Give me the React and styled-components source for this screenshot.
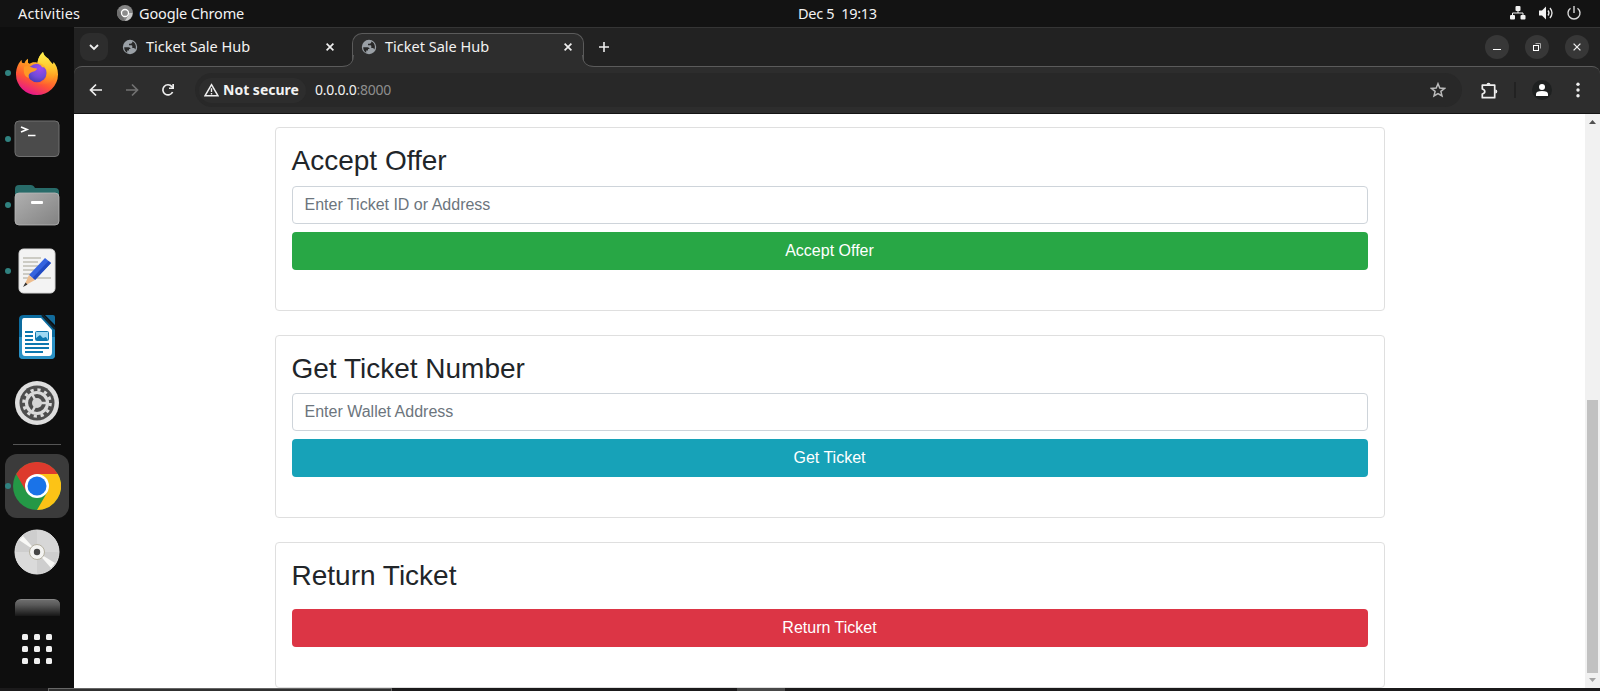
import React from "react";
import styled, { createGlobalStyle } from "styled-components";

const Global = createGlobalStyle`
  * { box-sizing: border-box; }
  html, body, #root { margin: 0; height: 691px; overflow: hidden; }
  body { background: #131313; }
  svg { display: block; flex: none; }
`;

const Desktop = styled.div`
  width: 1600px;
  height: 691px;
  display: flex;
  flex-direction: column;
  background: #131313;
  color: #f2f2f2;
  font-family: "Noto Sans", "Open Sans", sans-serif;
  font-size: 14.5px;
  overflow: hidden;
`;

const TopBar = styled.header`
  height: 27px;
  flex: none;
  display: grid;
  grid-template-columns: 780px auto 1fr;
  align-items: center;
  padding: 0 19px 1px 18px;
`;

const TopGroup = styled.div`
  display: flex;
  align-items: center;
  justify-content: ${(p) => (p.$end ? "flex-end" : "flex-start")};
  gap: ${(p) => p.$gap}px;
`;

const Text = styled.span`
  display: block;
  flex: none;
  width: ${(p) => (p.$w ? p.$w + "px" : "auto")};
  font-size: ${(p) => p.$size || 14.5}px;
  font-weight: ${(p) => p.$weight || 400};
  letter-spacing: ${(p) => p.$track || 0}px;
  color: ${(p) => p.$color || "#f2f2f2"};
  line-height: 20px;
  white-space: pre;
`;

const TopText = styled(Text)`
  padding-bottom: 1px;
`;

const Workspace = styled.div`
  height: 661px;
  flex: none;
  display: flex;
`;

const Dock = styled.nav`
  width: 74px;
  flex: none;
  background: #0e0e0e;
  display: flex;
  flex-direction: column;
  align-items: center;
  padding-top: 14px;
`;

const DockItem = styled.div`
  width: 64px;
  height: 64px;
  margin-bottom: ${(p) => p.$after ?? 2}px;
  flex: none;
  display: flex;
  align-items: center;
  justify-content: center;
  position: relative;
  border-radius: 12px;
  background: ${(p) => (p.$active ? "#3b3b3b" : "transparent")};
`;

const RunningDot = styled.i`
  position: absolute;
  left: 0;
  top: 29px;
  width: 6px;
  height: 6px;
  border-radius: 50%;
  background: #308280;
`;

const DockRule = styled.div`
  width: 48px;
  height: 1px;
  flex: none;
  background: #555;
  margin-bottom: 9px;
`;

const ClippedIcon = styled.div`
  width: 45px;
  height: 17px;
  flex: none;
  border-radius: 6px 6px 0 0;
  background: linear-gradient(#6d6d6d, #5a5a5a 30%, #171717);
  border-top: 1px solid #858585;
  margin-bottom: 18px;
`;

const AppGrid = styled.div`
  display: grid;
  grid-template-columns: repeat(3, 6px);
  grid-auto-rows: 6px;
  gap: 6px;
`;

const GridDot = styled.i`
  border-radius: 1.5px;
  background: #f0f0f0;
`;

const Browser = styled.main`
  flex: 1;
  display: flex;
  flex-direction: column;
  background: #222;
`;

const TabStrip = styled.div`
  height: 39px;
  flex: none;
  display: flex;
  align-items: flex-start;
  border-top: 1px solid #353535;
`;

const MenuSlot = styled.div`
  width: 40px;
  padding: 5px 0 0 6px;
`;

const TabMenu = styled.div`
  width: 28px;
  height: 28px;
  border-radius: 9px;
  background: #2d2d2d;
  display: flex;
  align-items: center;
  justify-content: center;
`;

const Tab = styled.div`
  width: ${(p) => (p.$active ? 232 : 228)}px;
  height: ${(p) => (p.$active ? 34 : 38)}px;
  margin: ${(p) => (p.$active ? "5px 0 0 10px" : "0")};
  padding: ${(p) => (p.$active ? "0 11px 8px 8px" : "0 8px 1px 8px")};
  flex: none;
  display: flex;
  align-items: center;
  position: relative;
  z-index: ${(p) => (p.$active ? 1 : 0)};
  background: ${(p) => (p.$active ? "#2d2d2d" : "transparent")};
  border: solid #5b5b5b;
  border-width: ${(p) => (p.$active ? "1px 1px 0" : "0")};
  border-radius: ${(p) => (p.$active ? "10px 10px 0 0" : "0")};
`;

const TabLabel = styled(Text)`
  flex: 1;
  margin-left: 8px;
  padding-bottom: 1px;
`;

const TabFlare = styled.svg`
  position: absolute;
  bottom: 0;
  ${(p) => (p.$right ? "left: 229px; transform: scaleX(-1);" : "right: 229px;")}
`;

const StripRest = styled.div`
  flex: 1;
  height: 38px;
  display: flex;
  align-items: center;
  padding: 0 11px 1px 15px;
  gap: 16px;
`;

const Spacer = styled.div`
  flex: 1;
`;

const WindowButton = styled.div`
  width: 24px;
  height: 24px;
  border-radius: 50%;
  background: #373737;
  display: flex;
  align-items: center;
  justify-content: center;
`;

const Toolbar = styled.div`
  height: 48px;
  flex: none;
  display: flex;
  align-items: center;
  padding: 0 14px 1px 14px;
  background: #2d2d2d;
  border: solid #5b5b5b;
  border-width: 1px 0 0;
  border-radius: 8px 8px 0 0;
  box-shadow: inset 0 -1px #141414;
`;

const NavButtons = styled.div`
  width: 107px;
  display: flex;
  gap: 20px;
`;

const AddressBar = styled.div`
  width: 1267px;
  height: 34px;
  border-radius: 17px;
  background: #282828;
  display: flex;
  align-items: center;
  padding: 0 16px 0 4px;
`;

const SecurityChip = styled.div`
  width: 107px;
  height: 25px;
  border-radius: 13px;
  background: #2d2d2d;
  display: flex;
  align-items: center;
  padding-left: 5px;
  gap: 4px;
  margin-right: 9px;
`;

const ToolbarActions = styled.div`
  flex: 1;
  display: flex;
  align-items: center;
  padding-left: 19px;
`;

const ActionRule = styled.div`
  width: 2px;
  height: 16px;
  margin: 0 16px;
  background: #222;
`;

const Avatar = styled.div`
  width: 20px;
  height: 20px;
  border-radius: 50%;
  background: #1e2020;
  display: flex;
  align-items: center;
  justify-content: center;
  margin-right: 19px;
`;

const Viewport = styled.div`
  height: 574px;
  flex: none;
  display: flex;
  background: #fff;
  color: #212529;
  font-family: "Liberation Sans", Arial, sans-serif;
`;

const Page = styled.div`
  flex: 1;
  height: 574px;
  overflow: hidden;
  padding: 13px 200.5px 0;
`;

const Card = styled.section`
  border: 1px solid #dfdfdf;
  border-radius: 4px;
  padding: 16px 16px 40px;
  margin-bottom: 24px;
`;

const CardTitle = styled.h3`
  margin: 0 0 8px;
  font-size: 28px;
  font-weight: 400;
  line-height: 33.6px;
`;

const Field = styled.input`
  display: block;
  width: 100%;
  height: 38px;
  border: 1px solid #ced4da;
  border-radius: 4px;
  padding: 6px 12px;
  font: 16px/24px "Liberation Sans", Arial, sans-serif;
  background: #fff;
  &::placeholder { color: #6c757d; opacity: 1; }
`;

const Button = styled.button`
  display: block;
  width: 100%;
  height: 38px;
  margin-top: ${(p) => (p.$spaced ? 16 : 8)}px;
  border: 0;
  border-radius: 4px;
  padding: 0;
  background: ${(p) => p.$color};
  color: #fff;
  font: 16px/24px "Liberation Sans", Arial, sans-serif;
`;

const ScrollTrack = styled.div`
  width: 15px;
  flex: none;
  background: #f1f1f1;
  display: flex;
  flex-direction: column;
  align-items: center;
  padding-top: 6px;
`;

const ScrollThumb = styled.div`
  width: 11px;
  height: 273px;
  margin: 276px 0 5px;
  background: #c1c1c1;
`;

const BottomEdge = styled.footer`
  height: 3px;
  flex: none;
  display: flex;
  background: #1b1a1b;
`;

const EdgeWindow = styled.div`
  width: ${(p) => p.$w}px;
  flex: none;
  margin-left: ${(p) => p.$left}px;
  background: ${(p) => (p.$plain ? "#484848" : "#303030")};
  border: solid #666;
  border-width: ${(p) => (p.$plain ? "0" : "1px 1px 0")};
`;

const Globe = () => (
  <svg width="16" height="16" viewBox="0 0 16 16">
    <circle cx="8" cy="8" r="7.2" fill="#9aa0a6" />
    <path d="M2.2 8.2h4.3c1.2 0 2 .8 2 1.800H7v1.600H5.2v2.100C3.300 12.700 2.200 10.800 2.200 8.200zM10.300 2.400c2.300.9 3.600 2.900 3.600 5.400 0 1-.2 1.900-.6 2.700-.3-1-1-1.500-1.900-1.500H10.300V7.100c0-.6-.4-.9-.9-.9H7V4.800h1.500c.9 0 1.800-.8 1.800-1.700z" fill="#282828" />
  </svg>
);

const Cross = ({ size = 8, color = "#eee", weight = 1.7 }) => (
  <svg width={size} height={size} viewBox="0 0 8 8">
    <path d="M.6.6l6.800 6.800M7.400.6L.6 7.400" stroke={color} strokeWidth={weight} />
  </svg>
);

const ChromeMono = () => (
  <svg width="16" height="16" viewBox="0 0 16 16">
    <circle cx="8" cy="8" r="8" fill="#858585" />
    <path d="M8 8h7.500A8 8 0 0 1 8 16l3.500-6z" fill="#c8c8c8" />
    <path d="M1 4l4 6 3 6A8 8 0 0 1 1 4z" fill="#6e6e6e" />
    <circle cx="8" cy="8" r="3.500" fill="#8b8b8b" stroke="#fff" strokeWidth="1.300" />
  </svg>
);

const Network = () => (
  <svg width="16" height="14" viewBox="0 0 16 14" fill="#f2f2f2">
    <rect x="5.500" y="0" width="5" height="5" rx="1" />
    <rect x="0" y="9" width="5" height="4.500" rx="1" />
    <rect x="10.500" y="9" width="5" height="4.500" rx="1" />
    <path d="M8 4v3M2.500 10V7h10.500v3" fill="none" stroke="#f2f2f2" />
  </svg>
);

const Volume = () => (
  <svg width="16" height="14" viewBox="0 0 16 14">
    <path d="M0 4.500h3L7 .5v13L3 9.500H0z" fill="#f2f2f2" />
    <path d="M9 4.500q2 2.500 0 5M11 2q4 5 0 10" fill="none" stroke="#e8e8e8" strokeWidth="1.300" />
  </svg>
);

const Power = () => (
  <svg width="14" height="14" viewBox="0 0 14 14" fill="none" stroke="#d8d8d8" strokeWidth="1.400">
    <path d="M7 0v7M3.500 2.200a6 6 0 1 0 7 0" />
  </svg>
);

const Arrow = ({ back }) => (
  <svg width="16" height="16" viewBox="0 0 16 16" fill="none" stroke={back ? "#efefef" : "#717171"} strokeWidth="1.700">
    {back ? <path d="M14 8H3M8 2.500L2.500 8 8 13.500" /> : <path d="M2 8h11M8 2.500L13.500 8 8 13.500" />}
  </svg>
);

const Reload = () => (
  <svg width="16" height="16" viewBox="0 0 16 16">
    <path d="M12.600 10A5.100 5.100 0 1 1 11.900 4.600L13.300 6" fill="none" stroke="#efefef" strokeWidth="1.700" />
    <path d="M14 2v5H9V5.500h3.300V2z" fill="#efefef" />
  </svg>
);

const Warning = () => (
  <svg width="15" height="14" viewBox="0 0 15 14">
    <path d="M7.500 1.700L14 12.800H1z" fill="none" stroke="#efefef" strokeWidth="1.500" />
    <path d="M7.500 5.300v3.800M7.500 10v1.400" stroke="#efefef" strokeWidth="1.400" />
  </svg>
);

const Star = () => (
  <svg width="16" height="16" viewBox="0 0 16 16">
    <path d="M8 1.700l1.800 4.300 4.700.4-3.600 3 1.100 4.600L8 11.600 4 14l1.100-4.600-3.600-3L6.200 6z" fill="none" stroke="#bbb" strokeWidth="1.500" />
  </svg>
);

const Puzzle = () => (
  <svg width="17" height="17" viewBox="0 0 17 17">
    <path d="M1.300 3.200h12.400v12.500H1.300V12q2.500-.6 2.500-2.500T1.300 7z" fill="none" stroke="#efefef" strokeWidth="1.700" strokeLinejoin="round" />
    <path d="M5.500 2.700a2 2 0 0 1 4 0zM14.300 7.500a2 2 0 0 1 0 4z" fill="#efefef" />
  </svg>
);

const Firefox = () => (
  <svg width="44" height="45" viewBox="0 0 44 46" preserveAspectRatio="none">
    <defs>
      <linearGradient id="ff-body" x1=".8" y1="0" x2=".35" y2="1">
        <stop offset=".1" stopColor="#fff04a" />
        <stop offset=".42" stopColor="#ff9a20" />
        <stop offset=".7" stopColor="#ff5535" />
        <stop offset="1" stopColor="#e5148f" />
      </linearGradient>
      <radialGradient id="ff-core" cx=".65" cy=".25" r=".8">
        <stop offset="0" stopColor="#a04af0" />
        <stop offset=".6" stopColor="#704bd8" />
        <stop offset="1" stopColor="#4a3ab5" />
      </radialGradient>
      <linearGradient id="ff-tail" x1=".5" y1="0" x2=".5" y2="1">
        <stop offset="0" stopColor="#fff34f" />
        <stop offset=".5" stopColor="#ffc52d" />
        <stop offset="1" stopColor="#ff8a1e" stopOpacity=".1" />
      </linearGradient>
    </defs>
    <path d="M28 1c-3 3-5 6-5.500 11-4-1-6 0-8 1l-1.500-1V8c-2 1-3 3-3.500 4.500L7 12 6.500 9C2 14 1 20 1 24a21 21 0 0 0 42 0c0-6-2-10-4.500-13v3c-2-2-4-4-5-6-3-2-5-4-5.500-7z" fill="url(#ff-body)" />
    <path d="M28 1c-3 3-5 6-5.500 11 5 1 9 5 9 11 0 7-4 10-10 10 9 4 18-1 19-12 .5-5-1-8-2.500-9v3c-1.500-3-4-5-5-7-3-2-4.500-4-5-7z" fill="url(#ff-tail)" />
    <circle cx="22" cy="22.500" r="9.500" fill="url(#ff-core)" />
    <path d="M9 16c4-2 6 1 13 2 0 2-3 3-5 3.500-3 1-4 3-3 6-4-1-6-5-5-11.500z" fill="#ff9825" />
    <path d="M22 12.500c2 0 4 .3 6 1.500l3 3c-2-.5-3-.3-4-.5-1-2-3-3-5-4z" fill="#ffb92a" />
  </svg>
);

const Terminal = () => (
  <svg width="46" height="38" viewBox="0 0 46 38">
    <rect x="1" y="1" width="44" height="35.500" rx="4" fill="#4b4b4b" stroke="#707070" />
    <path d="M7 7l6 2.500L7 12M14 15.500h7.500" fill="none" stroke="#fff" strokeWidth="1.700" />
  </svg>
);

const Files = () => (
  <svg width="46" height="42" viewBox="0 0 46 42">
    <defs>
      <linearGradient id="folder" x1="0" y1="0" x2="1" y2="1">
        <stop stopColor="#b0b0b0" /><stop offset="1" stopColor="#828282" />
      </linearGradient>
    </defs>
    <path d="M1 14V5q0-4 4-4h12q2 0 3 1.500l1 1.500h20q4 0 4 4v6z" fill="#286b69" />
    <rect x="1" y="9" width="44" height="32" rx="4" fill="url(#folder)" stroke="#b9b9b9" strokeWidth=".8" />
    <rect x="17" y="17" width="12" height="3" rx="1" fill="#fff" />
  </svg>
);

const TextEditor = () => (
  <svg width="38" height="46" viewBox="0 0 38 46">
    <rect x="1" y="1" width="36" height="44" rx="4.500" fill="#f3f3f3" stroke="#d5d5d5" />
    <path d="M5 10h18M5 14h15M5 18h18M5 22h15M5 26h12M5 30h28" stroke="#c0beb5" strokeWidth="1.500" />
    <path d="M27 10l6 5-16 17-6-5z" fill="#3563df" />
    <path d="M33 15L17 32l-2.500-2L30.500 13z" fill="#214ac2" />
    <path d="M11 27l6 5-11 6z" fill="#edbd8e" />
    <path d="M7.500 34.500l2 2L5 39z" fill="#333" />
  </svg>
);

const Writer = () => (
  <svg width="38" height="46" viewBox="0 0 38 46">
    <path d="M6 1h19l12 13v27q0 4-4 4H5q-4 0-4-4V5q0-4 5-4z" fill="#0c6c9f" />
    <path d="M1 23h36v18q0 4-4 4H5q-4 0-4-4z" fill="#2a91c5" />
    <path d="M27 1h8q2 0 2 2v8z" fill="#126b9b" />
    <path d="M24 1l13 14" stroke="#10222c" strokeWidth="2" />
    <path d="M6 4h17l11 12v22q0 4-3 4H7q-3 0-3-4V7q0-3 2-3z" fill="#fff" />
    <path d="M7 18h8M7 22h8M7 26h8M7 30h24M7 34h24M7 38h18" stroke="#0d78b0" strokeWidth="1.800" />
    <rect x="17.500" y="17.500" width="13" height="9" rx="1" fill="#9ed8f3" stroke="#0d78b0" />
    <path d="M18 26v-2l4-3 3 3 3-1 2 3z" fill="#0d78b0" />
  </svg>
);

const Settings = () => (
  <svg width="46" height="46" viewBox="0 0 46 46" fill="none">
    <circle cx="23" cy="23" r="22" fill="#dedede" />
    <circle cx="23" cy="23" r="17.500" fill="#4d4d4d" />
    <circle cx="23" cy="23" r="13.300" stroke="#dadada" strokeWidth="3" strokeDasharray="3.200 3.764" />
    <circle cx="23" cy="23" r="10.500" stroke="#dadada" strokeWidth="3.200" />
    <path d="M23 23l-5-9M23 23h11M23 23l-5 9" stroke="#dadada" strokeWidth="2.500" />
    <circle cx="23" cy="23" r="5" fill="#d6d6d6" />
  </svg>
);

const Chrome = () => (
  <svg width="48" height="48" viewBox="0 0 48 48">
    <circle cx="24" cy="24" r="24" fill="#249846" />
    <path d="M24 12h20.800A24 24 0 0 1 24 48l10.400-18z" fill="#fcc316" />
    <path d="M3.200 12A24 24 0 0 1 44.800 12H24L13.600 30z" fill="#dd3a2d" />
    <circle cx="24" cy="24" r="12" fill="#fff" />
    <circle cx="24" cy="24" r="9.500" fill="#1a73e8" />
  </svg>
);

const Disc = () => (
  <svg width="46" height="46" viewBox="0 0 46 46">
    <circle cx="23" cy="23" r="22" fill="#cecece" stroke="#e3e3e3" />
    <path d="M23 23V1a22 22 0 0 1 22 22z" fill="#d7d7d7" />
    <path d="M23 23V45A22 22 0 0 1 1 23z" fill="#dadada" />
    <path d="M23 23L5 11l4-4zM23 23l18 11-4 5z" fill="#f8f8f6" />
    <circle cx="23" cy="23" r="7.500" fill="#f4f4f2" stroke="#b5b1a1" />
    <circle cx="23" cy="23" r="3.200" fill="#464646" />
  </svg>
);

const PINNED = [
  { Icon: Firefox, running: true },
  { Icon: Terminal, running: true },
  { Icon: Files, running: true },
  { Icon: TextEditor, running: true },
  { Icon: Writer },
  { Icon: Settings, after: 9 },
];

const CARDS = [
  { title: "Accept Offer", hint: "Enter Ticket ID or Address", action: "Accept Offer", color: "#28a745" },
  { title: "Get Ticket Number", hint: "Enter Wallet Address", action: "Get Ticket", color: "#17a2b8" },
  { title: "Return Ticket", action: "Return Ticket", color: "#dc3545" },
];

const Flare = ({ right }) => (
  <TabFlare $right={right} width="12" height="12" viewBox="0 0 12 12">
    <path d="M0 12V11.500Q11.500 11.500 11.500 0H12V12z" fill="#2d2d2d" />
    <path d="M0 11.500Q11.500 11.500 11.500 0" fill="none" stroke="#5b5b5b" />
  </TabFlare>
);

const BrowserTab = ({ active }) => (
  <Tab $active={active}>
    {active && <Flare />}
    <Globe />
    <TabLabel>Ticket Sale Hub</TabLabel>
    <Cross />
    {active && <Flare right />}
  </Tab>
);

export default function App() {
  return (
    <Desktop>
      <Global />
      <TopBar>
        <TopGroup $gap={37}>
          <TopText $w={62} $track={0.18}>Activities</TopText>
          <TopGroup $gap={6}>
            <ChromeMono />
            <TopText $track={-0.15}>Google Chrome</TopText>
          </TopGroup>
        </TopGroup>
        <TopText $track={-0.3}>Dec 5  19:13</TopText>
        <TopGroup $end $gap={12.5}>
          <Network />
          <Volume />
          <Power />
        </TopGroup>
      </TopBar>

      <Workspace>
        <Dock>
          {PINNED.map(({ Icon, running, after }, i) => (
            <DockItem key={i} $after={after}>
              {running && <RunningDot />}
              <Icon />
            </DockItem>
          ))}
          <DockRule />
          <DockItem $active>
            <RunningDot />
            <Chrome />
          </DockItem>
          <DockItem $after={15}>
            <Disc />
          </DockItem>
          <ClippedIcon />
          <AppGrid>
            {Array.from({ length: 9 }, (_, i) => <GridDot key={i} />)}
          </AppGrid>
        </Dock>

        <Browser>
          <TabStrip>
            <MenuSlot>
              <TabMenu>
                <svg width="10" height="8" viewBox="0 0 10 8"><path d="M1 2l4 4 4-4" fill="none" stroke="#eee" strokeWidth="1.800" /></svg>
              </TabMenu>
            </MenuSlot>
            <BrowserTab />
            <BrowserTab active />
            <StripRest>
              <svg width="10" height="10" viewBox="0 0 10 10"><path d="M5 0v10M0 5h10" stroke="#eee" strokeWidth="1.600" /></svg>
              <Spacer />
              <WindowButton><svg width="8" height="8" viewBox="0 0 8 8"><path d="M0 6.500h8" stroke="#fff" /></svg></WindowButton>
              <WindowButton><svg width="8" height="8" viewBox="0 0 8 8" fill="none"><path d="M2.500.5h5v5" stroke="#aaa" /><rect x=".5" y="2.500" width="5" height="5" stroke="#fff" /></svg></WindowButton>
              <WindowButton><Cross weight={1.3} /></WindowButton>
            </StripRest>
          </TabStrip>

          <Toolbar>
            <NavButtons>
              <Arrow back />
              <Arrow />
              <Reload />
            </NavButtons>
            <AddressBar>
              <SecurityChip>
                <Warning />
                <Text $weight={700} $size={14}>Not secure</Text>
              </SecurityChip>
              <Text $size={14} $track={-0.25}>0.0.0.0</Text>
              <Text $size={14} $track={-0.25} $color="#8e8e8e">:8000</Text>
              <Spacer />
              <Star />
            </AddressBar>
            <ToolbarActions>
              <Puzzle />
              <ActionRule />
              <Avatar>
                <svg width="12" height="12" viewBox="0 0 12 12" fill="#fff"><circle cx="6" cy="3" r="3" /><path d="M0 12V10q0-3 6-3t6 3v2z" /></svg>
              </Avatar>
              <svg width="14" height="16" viewBox="0 0 14 16" fill="#efefef"><circle cx="7" cy="2.200" r="1.700" /><circle cx="7" cy="8" r="1.700" /><circle cx="7" cy="13.800" r="1.700" /></svg>
            </ToolbarActions>
          </Toolbar>

          <Viewport>
            <Page>
              {CARDS.map(({ title, hint, action, color }) => (
                <Card key={title}>
                  <CardTitle>{title}</CardTitle>
                  {hint && <Field placeholder={hint} />}
                  <Button $color={color} $spaced={!hint}>{action}</Button>
                </Card>
              ))}
            </Page>
            <ScrollTrack>
              <svg width="7" height="4" viewBox="0 0 7 4"><path d="M0 4l3.500-4L7 4z" fill="#505050" /></svg>
              <ScrollThumb />
              <svg width="7" height="4" viewBox="0 0 7 4"><path d="M0 0h7L3.500 4z" fill="#a3a3a3" /></svg>
            </ScrollTrack>
          </Viewport>
        </Browser>
      </Workspace>

      <BottomEdge>
        <EdgeWindow $left={48} $w={344} />
        <EdgeWindow $plain $left={345} $w={48} />
      </BottomEdge>
    </Desktop>
  );
}
